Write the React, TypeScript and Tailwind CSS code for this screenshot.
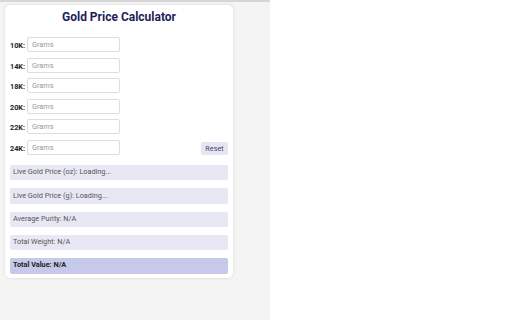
import React from "react";

const karats = ["10K", "14K", "18K", "20K", "22K", "24K"];
const infos = [
  "Live Gold Price (oz): Loading...",
  "Live Gold Price (g): Loading...",
  "Average Purity: N/A",
  "Total Weight: N/A",
];

export default function App() {
  return (
    <div
      className="w-[512px] h-[320px] flex bg-white overflow-hidden"
      style={{ fontFamily: "Roboto, 'Liberation Sans', sans-serif" }}
    >
      <div className="w-[270px] h-full bg-[#f4f4f4] border-t-2 border-[#d6d6d6] pt-[3px] pl-[5px]">
        <div className="w-[228px] bg-white rounded-[5px] shadow-[0_0_3px_rgba(0,0,0,0.12)] px-[5px] pt-[4px] pb-[4px]">
          <h1 className="text-center text-[12px] leading-[16px] font-bold text-[#1e1e5a]">
            Gold Price Calculator
          </h1>
          <div className="mt-[12px] flex flex-col gap-[5.6px]">
            {karats.map((k, i) => (
              <div key={k} className="flex items-end">
                <span className="w-[17px] text-[7.3px] leading-[10px] font-bold text-[#222] pb-[1px]">
                  {k}:
                </span>
                <input
                  placeholder="Grams"
                  className="w-[93px] h-[15px] border border-[#dedede] rounded-[2px] pl-[4px] text-[7.3px] text-[#333] placeholder:text-[#999] outline-none"
                />
                {i === karats.length - 1 && (
                  <button className="ml-auto w-[27px] h-[13px] bg-[#e6e6f3] rounded-[2px] text-[7.3px] leading-[13px] text-[#4a4a66]">
                    Reset
                  </button>
                )}
              </div>
            ))}
          </div>
          <div className="mt-[10px] flex flex-col gap-[7.8px]">
            {infos.map((t) => (
              <div
                key={t}
                className="h-[15.5px] bg-[#e8e8f4] rounded-[2px] pl-[3px] flex items-center text-[7.3px] text-[#555]"
              >
                {t}
              </div>
            ))}
            <div className="h-[15.5px] bg-[#c6c9e9] rounded-[2px] pl-[3px] flex items-center text-[7.3px] font-bold text-[#222]">
              Total Value: N/A
            </div>
          </div>
        </div>
      </div>
    </div>
  );
}
